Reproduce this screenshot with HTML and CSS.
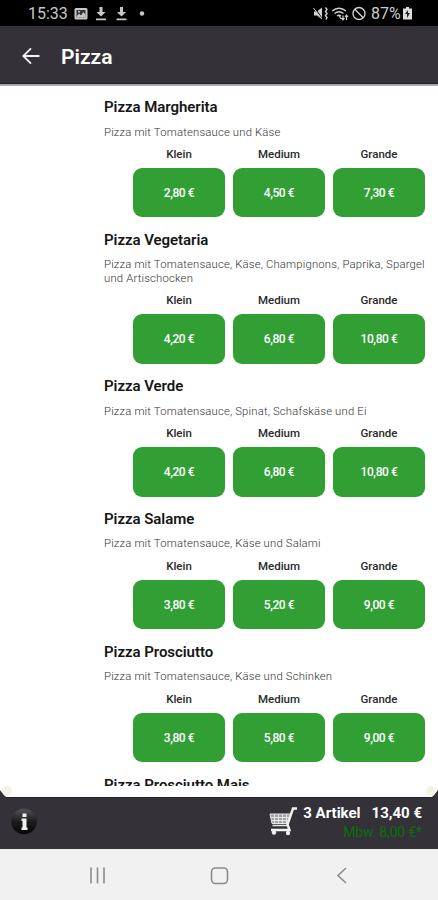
FILE: index.html
```html
<!DOCTYPE html>
<html lang="de">
<head>
<meta charset="utf-8">
<title>Pizza</title>
<link rel="stylesheet" href="styles.css">
</head>
<body>
<div class="statusbar">
  <span class="time">15:33</span>
  <svg class="left-icons" width="72" height="16" viewBox="0 0 72 16">
    <rect x="0.5" y="2" width="13" height="11.5" rx="1.5" fill="#c8c8c8"/>
    <path d="M2.500 4h9v7.500h-9z" fill="#333"/><path d="M2.500 10.500l2.500-3 2 2 2.500-3.500 2 3v2.500h-9z" fill="#c8c8c8"/><circle cx="5" cy="5.700" r="1" fill="#c8c8c8"/>
    <g fill="#c8c8c8"><path d="M25.500 1h3v5h3l-4.500 4.500-4.500-4.500h3zM22 12.500h10v1.700h-10z"/><path d="M46 1h3v5h3l-4.500 4.500-4.500-4.500h3zM42.500 12.500h10v1.700h-10z"/><circle cx="68" cy="7.500" r="2.200"/></g>
  </svg>
  <svg class="right-icons" width="55" height="16" viewBox="0 0 55 16">
    <g fill="none" stroke="#d0d0d0" stroke-width="1.400">
      <path d="M1 5.500h3l5-4v12l-5-4h-3z" fill="#d0d0d0" stroke="none"/>
      <path d="M1 1l9 13" stroke="#000" stroke-width="1.300"/><path d="M0.500 2l8.500 11" stroke-width="1"/><path d="M12.500 1.500l1.500 2-1.500 2 1.500 2-1.500 2 1.500 2-1 2"/>
      <path d="M19 5q7-5.500 14 0M21.500 7.500q4.500-3.500 9 0M24 10q2-1.500 4 0"/><path d="M26 9.500l2 3.500M30 9.500v4M28.500 12l1.500 2 1.500-2M33.500 14v-4M32 11l1.500-2 1.500 2" stroke-width="1.200"/>
      <circle cx="46" cy="7.500" r="6"/><path d="M41.800 3.300l8.400 8.400"/>
    </g>
  </svg>
  <span class="percent">87%</span>
  <svg class="battery" width="9" height="13" viewBox="0 0 9 13"><path d="M3 0h3v1.500h3v11h-9v-11h3z" fill="#ddd"/><path d="M5 3l-3 4h2v4l3-5h-2z" fill="#222"/></svg>
</div>
<header class="appbar">
  <svg width="18" height="18" viewBox="0 0 18 18"><path d="M17.500 9h-16M9 1.300l-7.700 7.700 7.700 7.700" fill="none" stroke="#f4f4f4" stroke-width="1.800"/></svg>
  <h1>Pizza</h1>
</header>
<main class="menu">
  <div class="list">
    <article>
      <h2>Pizza Margherita</h2>
      <p>Pizza mit Tomatensauce und Käse</p>
      <div class="sizes"><span>Klein</span><span>Medium</span><span>Grande</span><button>2,80 €</button><button>4,50 €</button><button>7,30 €</button></div>
    </article>
    <article>
      <h2>Pizza Vegetaria</h2>
      <p>Pizza mit Tomatensauce, Käse, Champignons, Paprika, Spargel<br>und Artischocken</p>
      <div class="sizes"><span>Klein</span><span>Medium</span><span>Grande</span><button>4,20 €</button><button>6,80 €</button><button>10,80 €</button></div>
    </article>
    <article>
      <h2>Pizza Verde</h2>
      <p>Pizza mit Tomatensauce, Spinat, Schafskäse und Ei</p>
      <div class="sizes"><span>Klein</span><span>Medium</span><span>Grande</span><button>4,20 €</button><button>6,80 €</button><button>10,80 €</button></div>
    </article>
    <article>
      <h2>Pizza Salame</h2>
      <p>Pizza mit Tomatensauce, Käse und Salami</p>
      <div class="sizes"><span>Klein</span><span>Medium</span><span>Grande</span><button>3,80 €</button><button>5,20 €</button><button>9,00 €</button></div>
    </article>
    <article>
      <h2>Pizza Prosciutto</h2>
      <p>Pizza mit Tomatensauce, Käse und Schinken</p>
      <div class="sizes"><span>Klein</span><span>Medium</span><span>Grande</span><button>3,80 €</button><button>5,80 €</button><button>9,00 €</button></div>
    </article>
    <article>
      <h2>Pizza Prosciutto Mais</h2>
    </article>
  </div>
</main>
<footer class="cartbar">
  <svg class="corner left" width="12" height="13" viewBox="0 0 12 13"><circle cx="7" cy="5" r="5" fill="#f3f3e6"/><path d="M0 4q3 5 8 8.500h-8z" fill="#353138"/></svg>
  <svg class="corner right" width="12" height="13" viewBox="0 0 12 13"><circle cx="5" cy="5" r="5" fill="#f3f3e6"/><path d="M12 4q-3 5-8 8.500h8z" fill="#353138"/></svg>
  <svg class="info" width="26" height="28" viewBox="0 0 26 28">
    <defs><linearGradient id="ball" x1="0" y1="0" x2="0" y2="1"><stop offset="0" stop-color="#555357"/><stop offset=".5" stop-color="#1c1b1d"/><stop offset="1" stop-color="#050505"/></linearGradient></defs>
    <circle cx="13" cy="13.500" r="12.800" fill="url(#ball)"/><path d="M11.500 5.500h4v3.500h-4zM10.500 10.500h5v9h1v2.500h-6v-2.500h1v-6.500h-1z" fill="#efefef"/>
  </svg>
  <svg class="cart" width="29" height="29" viewBox="0 0 29 29">
    <path d="M1 7h20.500l-3 9.500h-15.500z" fill="#a19fa2"/>
    <path d="M1 7h20.500M1 7l2 9.500h15.500M2 10.500h18M2.500 13.500h17M5.500 7v9M9.500 7v9M13.500 7v9M17.500 7v9" stroke="#e7e7e7" fill="none"/>
    <path d="M28 1.500h-4l-5.500 16 2 5.500h-18.500" fill="none" stroke="#f1f1f1" stroke-width="2.400"/>
    <path d="M3.500 18.500h15" stroke="#e7e7e7" stroke-width="1.500"/>
    <circle cx="5" cy="25.500" r="2.200" fill="#eee"/><circle cx="19" cy="26" r="2.200" fill="#eee"/>
  </svg>
  <div class="totals"><div class="sum"><span>3 Artikel</span><span>13,40 €</span></div><div class="minimum">Mbw. 8,00 €*</div></div>
</footer>
<nav class="navbar">
  <svg width="438" height="51" viewBox="0 0 438 51" fill="none" stroke="#8b8b8b" stroke-width="1.600"><path d="M91 18.500v16M97.500 18.500v16M104 18.500v16"/><rect x="211.500" y="19" width="16" height="15.500" rx="4"/><path d="M346 19l-8 7.500 8 7.500"/></svg>
</nav>
</body>
</html>
```
FILE: styles.css
```css
* { box-sizing: border-box; }
body { margin: 0; width: 438px; height: 900px; overflow: hidden; display: flex; flex-direction: column; background: #fff; font-family: Roboto, "Liberation Sans", sans-serif; }
.statusbar { height: 26px; background: #000; color: #c8c8c8; display: flex; align-items: center; padding: 1px 0 0 28px; font-size: 16px; }
.time { width: 46px; }
.right-icons { margin-left: 167px; }
.percent { margin-left: 3px; width: 32px; color: #ccc; }
.appbar { height: 60px; background: #353138; border-bottom: 2px solid #aaa6ab; box-shadow: inset 0 -1px #222025; display: flex; align-items: center; padding: 2px 0 0 22px; gap: 21px; color: #fff; }
h1 { margin: 1px 0 0; font-size: 21px; font-weight: 600; line-height: 28px; }
.menu { height: 711px; padding: 11px 12px 0 104px; }
.list { height: 689px; overflow: hidden; }
article { padding-bottom: 12.300px; }
h2 { margin: 0; font-size: 15px; font-weight: 600; line-height: 20px; letter-spacing: -.05px; color: #161616; white-space: nowrap; }
p { margin: 8.500px -8px 0 0; font-size: 11.300px; line-height: 13.600px; font-weight: 300; letter-spacing: .18px; color: #333; white-space: nowrap; }
.sizes { margin: 8px 0 0 29px; display: grid; grid-template-columns: repeat(3, 92px); column-gap: 8px; row-gap: 7px; }
.sizes span { text-align: center; font-size: 11.500px; font-weight: 500; line-height: 14px; color: #2a2a2a; }
.sizes button { border: 0; padding: 0; height: 49.400px; border-radius: 9px; background: #329f35; color: #fff; font: 500 12px/50px Roboto, sans-serif; letter-spacing: -.4px; }
.cartbar { position: relative; height: 52px; background: #353138; border-top: 1px solid #222025; display: flex; align-items: flex-start; padding: 0 16px 0 11px; }
.corner { position: absolute; top: -12px; }
.left { left: 0; }
.right { right: 0; }
.info { margin-top: 10px; }
.cart { margin: 9px 0 0 232px; }
.totals { margin: 5px 0 0 auto; color: #fff; text-align: right; }
.sum { display: flex; gap: 11px; font-size: 15px; font-weight: 700; line-height: 20px; white-space: nowrap; }
.minimum { font-size: 14px; line-height: 18px; letter-spacing: -.15px; color: #087008; }
.navbar { height: 51px; background: #f1f1f1; }
.navbar svg { display: block; }
```
